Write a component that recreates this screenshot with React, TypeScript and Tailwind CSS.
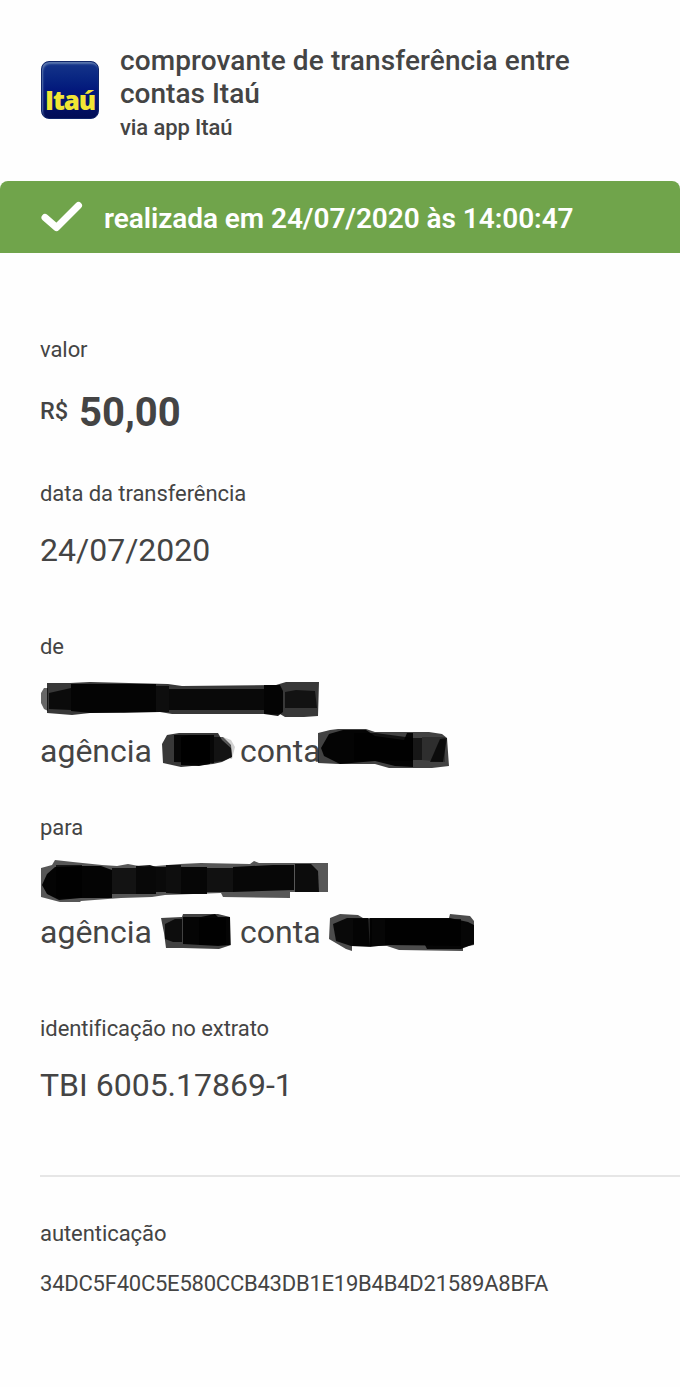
import React from "react";

interface Shape {
  points: string;
  opacity?: number;
}

interface ScribbleProps {
  width: number;
  height: number;
  shapes: Shape[];
  className?: string;
}

/** Marker strokes that cover private data */
function Scribble({ width, height, shapes, className }: ScribbleProps) {
  return (
    <svg
      width={width}
      height={height}
      viewBox={`0 0 ${width} ${height}`}
      className={className}
      aria-label="oculto"
    >
      {shapes.map((shape, i) => (
        <polygon key={i} points={shape.points} fill="#000" opacity={shape.opacity ?? 1} />
      ))}
    </svg>
  );
}

// senders and receivers, each with name, branch and account strokes
const fromName: Shape[] = [
  { points: "1,15 4,10 8,10 8,33 4,31 1,25", opacity: 0.6 },
  { points: "7,5 30,5 50,4 128,6 142,8 236,7 246,4 279,4 278,38 264,39 245,39 240,36 132,36 120,34 84,35 50,35 32,37 7,35", opacity: 0.78 },
  { points: "31,6 116,6 116,34 80,34 50,35 31,33", opacity: 0.92 },
  { points: "9,15 31,10 31,32 9,31", opacity: 0.8 },
  { points: "116,8 129,8 129,34 116,34", opacity: 0.75 },
  { points: "129,11 224,11 224,32 129,32", opacity: 0.84 },
  { points: "224,7 240,7 243,13 243,34 238,38 224,36", opacity: 0.92 },
  { points: "245,14 256,12 275,13 277,30 245,30", opacity: 0.68 },
];

const fromBranch: Shape[] = [
  { points: "1,14 6,5 18,3 57,3 61,10 70,18 71,27 61,32 52,34 20,37 2,33", opacity: 0.78 },
  { points: "13,5 53,5 53,33 13,32", opacity: 0.88 },
  { points: "20,7 29,5 49,5 49,34 38,36 20,35", opacity: 0.95 },
  { points: "53,7 62,7 70,15 71,27 62,31 53,32", opacity: 0.65 },
  { points: "62,7 70,10 74,17 71,29 69,29 70,17", opacity: 0.18 },
];

const fromAccount: Shape[] = [
  { points: "0,3 12,0 20,-1 48,-1 57,2 111,2 124,4 129,8 131,36 114,38 71,38 57,34 20,34 0,33", opacity: 0.74 },
  { points: "3,18 11,4 25,0 48,0 57,6 86,10 89,3 95,3 95,37 77,36 57,31 22,34 6,26", opacity: 0.94 },
  { points: "36,3 58,3 95,8 95,31 36,31", opacity: 0.75 },
  { points: "94,8 104,8 104,30 94,30", opacity: 0.65 },
  { points: "104,7 127,7 127,32 104,30", opacity: 0.3 },
  { points: "122,9 129,8 125,32 112,32", opacity: 0.75 },
];

const toName: Shape[] = [
  { points: "1,9 12,6 15,1 33,3 62,6 77,7 88,5 104,8 140,5 161,4 210,5 214,2 219,4 288,4 288,33 250,33 250,39 183,38 181,34 125,36 112,38 81,39 41,42 40,43 20,43 1,38", opacity: 0.66 },
  { points: "2,26 7,15 15,8 41,7 61,7 72,11 72,39 41,39 19,41 7,35", opacity: 0.95 },
  { points: "16,6 42,6 42,39 16,39", opacity: 0.75 },
  { points: "72,9 96,9 96,35 72,35", opacity: 0.78 },
  { points: "96,7 110,6 116,8 116,35 96,35", opacity: 0.91 },
  { points: "116,8 126,8 126,33 116,33", opacity: 0.88 },
  { points: "126,6 141,6 141,35 126,34", opacity: 0.84 },
  { points: "141,8 167,8 167,35 141,35", opacity: 0.93 },
  { points: "167,9 193,9 193,33 167,33", opacity: 0.8 },
  { points: "193,8 233,6 254,6 254,31 193,33", opacity: 0.92 },
  { points: "255,5 271,5 278,12 279,33 255,33", opacity: 0.86 },
];

const toBranch: Shape[] = [
  { points: "0,7 21,6 22,3 57,3 69,6 70,34 58,38 22,37 5,37 3,22", opacity: 0.74 },
  { points: "4,13 14,8 21,8 21,31 12,31 4,28", opacity: 0.8 },
  { points: "22,6 40,6 54,3 57,6 69,6 69,34 57,35 22,33", opacity: 0.92 },
  { points: "38,7 65,7 65,34 38,34", opacity: 0.7 },
];

const toAccount: Shape[] = [
  { points: "1,7 11,3 29,4 34,7 120,7 121,3 141,5 145,10 145,34 134,36 134,40 70,39 58,35 23,35 23,40 17,38 0,28", opacity: 0.7 },
  { points: "4,13 18,7 39,7 41,36 22,35 7,30", opacity: 0.88 },
  { points: "41,7 121,7 139,11 145,14 145,33 132,38 98,38 96,34 58,34 41,36", opacity: 0.92 },
  { points: "24,8 43,8 43,35 24,35", opacity: 0.55 },
  { points: "56,8 132,8 132,35 56,34", opacity: 0.8 },
];

function ItauLogo() {
  return (
    <div className="mt-[61px] flex h-[58px] w-[58px] shrink-0 items-end justify-center rounded-[8px] border border-[#10266b] bg-linear-to-b from-[#16358a] via-[#03187c] to-[#020d55] shadow-[inset_1px_2px_2px_#5a76ad]">
      <span className="mb-[2px] font-['Open_Sans'] text-[26px] leading-[32px] font-extrabold tracking-[-1.2px] text-[#f1e534]">
        Itaú
      </span>
    </div>
  );
}

function Label({ children }: { children: React.ReactNode }) {
  return <div className="text-[22px] leading-[28px] tracking-[-0.06px]">{children}</div>;
}

function Value({ children }: { children: React.ReactNode }) {
  return <div className="text-[32px] leading-[40px]">{children}</div>;
}

interface PartyProps {
  label: string;
  name: Shape[];
  branch: Shape[];
  account: Shape[];
  accountWidth: number;
  accountOffset: string;
}

function Party({ label, name, branch, account, accountWidth, accountOffset }: PartyProps) {
  return (
    <section>
      <Label>{label}</Label>
      <Scribble width={290} height={44} shapes={name} className="mt-[17px]" />
      <div className="mt-[8px] flex h-[44px] text-[32px] leading-[42px]">
        <span className="w-[121px]">agência</span>
        <Scribble width={79} height={44} shapes={branch} />
        <span className="w-[80px] whitespace-nowrap">conta</span>
        <Scribble width={accountWidth} height={44} shapes={account} className={accountOffset} />
      </div>
    </section>
  );
}

export default function App() {
  return (
    <main className="h-[1387px] w-full overflow-hidden bg-[#fefefe] font-[Roboto,sans-serif] text-[#444]">
      <header className="flex h-[181px] pl-[41px]">
        <ItauLogo />
        <div className="ml-[21px] pt-[44px] font-medium">
          <h1 className="text-[28px] leading-[33px] font-medium tracking-[0.11px]">
            comprovante de transferência entre
            <br />
            <span className="tracking-normal">contas Itaú</span>
          </h1>
          <p className="mt-[4px] text-[22px] leading-[28px] tracking-[-0.1px]">via app Itaú</p>
        </div>
      </header>

      <div className="flex h-[72px] items-center rounded-t-[8px] bg-[#70a44b] pl-[40px] text-white">
        <svg width="44" height="36" viewBox="0 0 44 36" fill="none">
          <path d="M5 18.5L16.5 28.5L38.5 6.5" stroke="#fff" strokeWidth="7" strokeLinecap="round" strokeLinejoin="round" />
        </svg>
        <span className="ml-[20px] pt-[4px] text-[28px] leading-[36px] font-semibold tracking-[-0.06px]">
          realizada em 24/07/2020 às 14:00:47
        </span>
      </div>

      <div className="pl-[40px]">
        <section className="pt-[83px]">
          <Label>valor</Label>
          <div className="mt-[25px] flex h-[48px] leading-[48px]">
            <span className="w-[39px] text-[23.5px] leading-[45px] font-medium">R$</span>
            <span className="text-[40px] font-bold">50,00</span>
          </div>
        </section>

        <section className="mt-[43px]">
          <Label>data da transferência</Label>
          <div className="mt-[22px] pb-[1px]">
            <Value>24/07/2020</Value>
          </div>
        </section>

        <div className="mt-[62px] flex flex-col gap-[40px]">
          <Party
            label="de"
            name={fromName}
            branch={fromBranch}
            account={fromAccount}
            accountWidth={134}
            accountOffset="ml-[-2px] overflow-visible"
          />
          <Party
            label="para"
            name={toName}
            branch={toBranch}
            account={toAccount}
            accountWidth={148}
            accountOffset="ml-[9px]"
          />
        </div>

        <section className="mt-[60px]">
          <Label>identificação no extrato</Label>
          <div className="mt-[22px] pb-[1px]">
            <Value>TBI 6005.17869-1</Value>
          </div>
        </section>

        <hr className="mt-[69px] border-t-2 border-[#e6e6e6]" />

        <section className="mt-[43px]">
          <Label>autenticação</Label>
          <div className="mt-[22px] text-[22px] leading-[28px] tracking-[-0.23px]">
            34DC5F40C5E580CCB43DB1E19B4B4D21589A8BFA
          </div>
        </section>
      </div>
    </main>
  );
}
